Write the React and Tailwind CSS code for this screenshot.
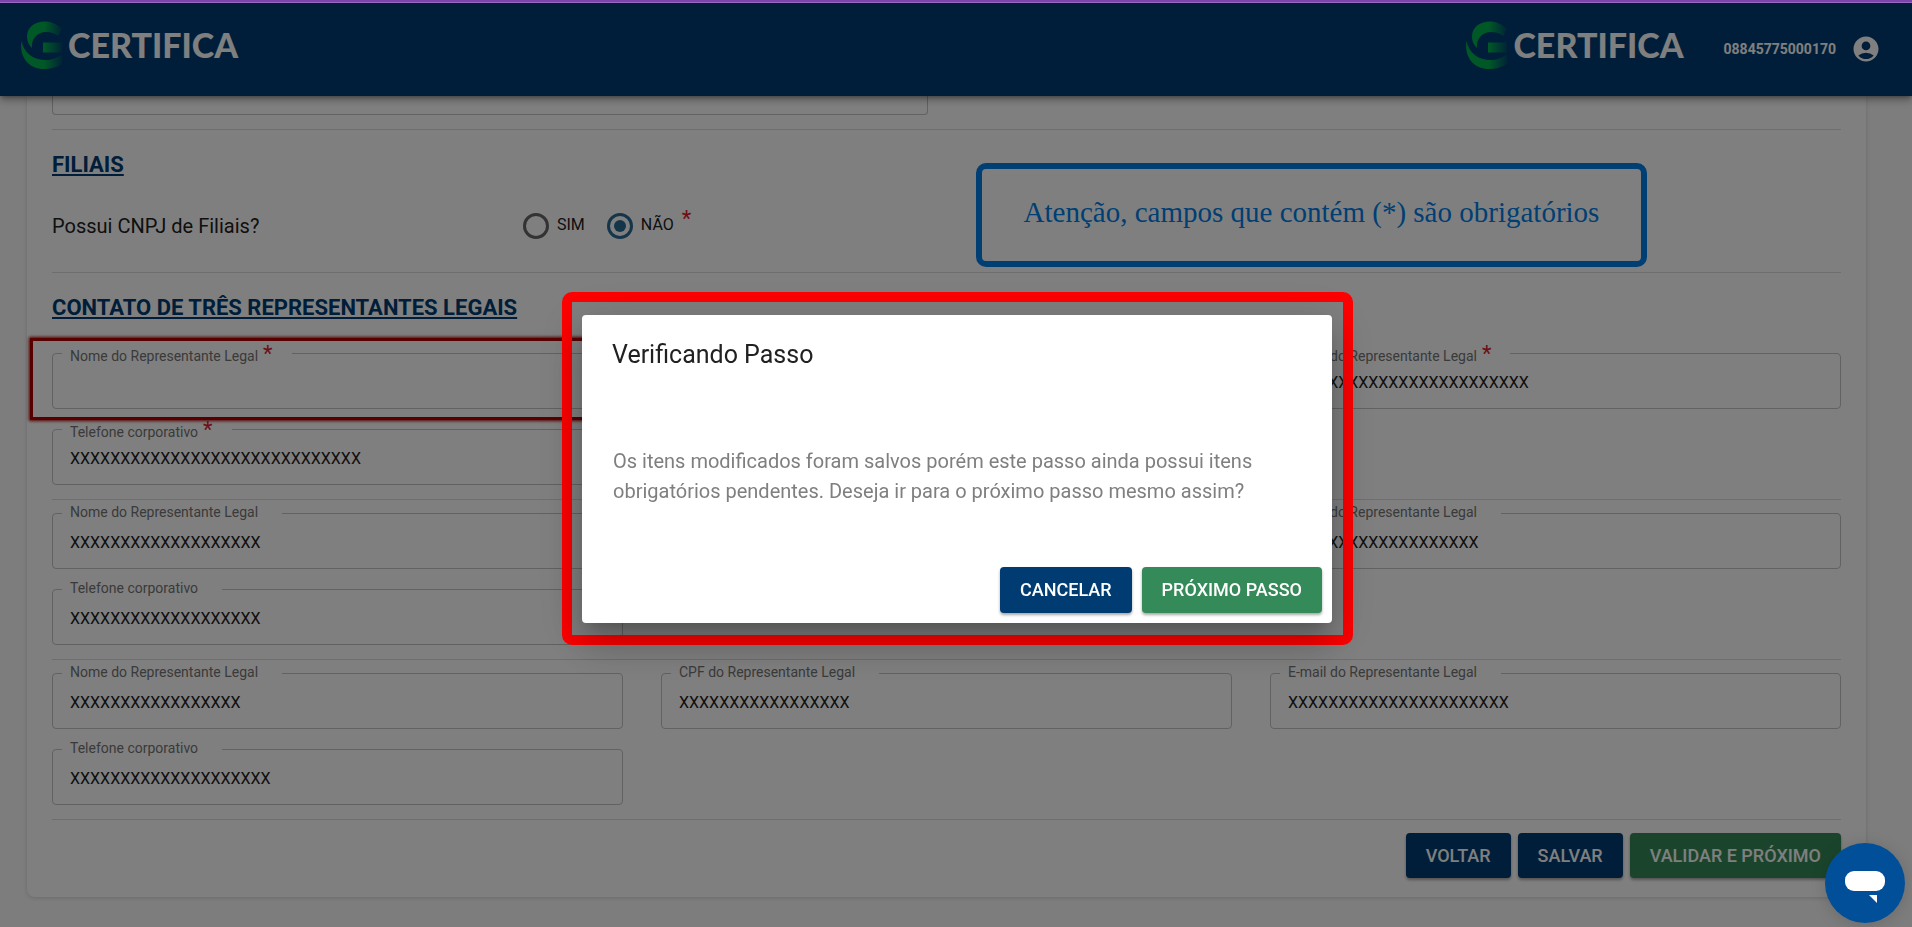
import React, { useState } from 'react';
import { MdAccountCircle } from 'react-icons/md';

const REPRESENTATIVES = [
  {
    id: 'rep1',
    required: true,
    name: '',
    cpf: 'XXXXXXXXXXXXXXXXX',
    email: 'XXXXXXXXXXXXXXXXXXXXXXXX',
    phone: 'XXXXXXXXXXXXXXXXXXXXXXXXXXXXX',
  },
  {
    id: 'rep2',
    name: 'XXXXXXXXXXXXXXXXXXX',
    cpf: 'XXXXXXXXXXXXXXXXX',
    email: 'XXXXXXXXXXXXXXXXXXX',
    phone: 'XXXXXXXXXXXXXXXXXXX',
  },
  {
    id: 'rep3',
    name: 'XXXXXXXXXXXXXXXXX',
    cpf: 'XXXXXXXXXXXXXXXXX',
    email: 'XXXXXXXXXXXXXXXXXXXXXX',
    phone: 'XXXXXXXXXXXXXXXXXXXX',
  },
];

function Logo({ id }) {
  return (
    <div className="flex items-center gap-1">
      <svg className="w-11 h-12" viewBox="0 0 44 48" aria-hidden="true">
        <defs>
          <linearGradient id={id} gradientUnits="userSpaceOnUse" x1="0" y1="0" x2="44" y2="0">
            <stop offset="0.55" stopColor="#00b04c" />
            <stop offset="1" stopColor="#003c72" />
          </linearGradient>
        </defs>
        <g fill={`url(#${id})`}>
          <path d="M42 8C37 3 31 .5 25 .5 14 .5 7 7 7 15.500 7 20 8.500 24 12 27 11 18 17 11 26 11c5 0 9 1.500 12 4z" />
          <path d="M1.500 20C-1 35 8 48 24 48c7 0 13-1.500 18-5V33c-5 4-10 6-16 6C13 39 4 32 1.500 20z" />
          <path d="M23 21.500h19v10H23z" />
        </g>
      </svg>
      <span className="font-[Lato] text-[34px] leading-[48px] font-black text-white">CERTIFICA</span>
    </div>
  );
}

function Asterisk() {
  return <span className="text-[22px] leading-3 text-[#dc202c]">*</span>;
}

function Field({ id, label, value, required }) {
  return (
    <div className="relative h-14">
      <fieldset className="absolute inset-x-0 -top-2 h-16 rounded border border-[#c4c4c4] px-[9px]" aria-hidden="true">
        <legend className="h-4 text-sm whitespace-nowrap">
          <span className="invisible pl-2 pr-6">
            {label}
            {required && ' *'}
          </span>
        </legend>
      </fieldset>
      <label
        htmlFor={id}
        className={`absolute left-[18px] flex gap-[5px] text-sm leading-4 text-[#757575] ${required ? '-top-[5px]' : '-top-[9px]'}`}
      >
        {label}
        {required && <Asterisk />}
      </label>
      <input
        id={id}
        defaultValue={value}
        required={required}
        className="relative h-full w-full bg-transparent px-[18px] pt-[2px] text-base text-[#212121] outline-none"
      />
    </div>
  );
}

function Representative({ rep }) {
  const { required } = rep;
  return (
    <div className="grid grid-cols-3 gap-x-[38px] gap-y-5 border-b border-[#dcdcdc] pt-[13px] pb-[14px]">
      <div className="relative">
        {required && (
          <div className="pointer-events-none absolute -inset-x-[22px] -top-[15px] -bottom-[11px] border-[3px] border-[#b00000] shadow-[0_0_3px_1px_#b00000]" />
        )}
        <Field id={`${rep.id}-name`} label="Nome do Representante Legal" value={rep.name} required={required} />
      </div>
      <Field id={`${rep.id}-cpf`} label="CPF do Representante Legal" value={rep.cpf} required={required} />
      <Field id={`${rep.id}-email`} label="E-mail do Representante Legal" value={rep.email} required={required} />
      <Field id={`${rep.id}-phone`} label="Telefone corporativo" value={rep.phone} required={required} />
    </div>
  );
}

function SectionTitle({ children }) {
  return (
    <h2 className="w-fit text-[22px] leading-7 font-bold text-[#003c72] underline decoration-2 underline-offset-2">
      {children}
    </h2>
  );
}

function Radio({ label, checked, onChange }) {
  return (
    <label className="flex items-center gap-2 text-base text-[#212121]">
      <input
        type="radio"
        name="filiais"
        checked={checked}
        onChange={onChange}
        className="grid size-[26px] appearance-none place-items-center rounded-full border-[3px] border-[#666666] checked:border-[#2b6a94] checked:before:size-3 checked:before:rounded-full checked:before:bg-[#2b6a94]"
      />
      <span className="pb-[2px]">{label}</span>
    </label>
  );
}

function Button({ className, children, ...props }) {
  return (
    <button
      type="button"
      className={`rounded px-5 text-lg font-medium text-white shadow-[0_2px_3px_rgba(0,0,0,0.35)] ${className}`}
      {...props}
    >
      {children}
    </button>
  );
}

function ConfirmDialog({ onClose }) {
  return (
    <div className="fixed inset-0 z-20 flex items-center justify-center bg-black/50 pt-[9px] pl-[3px]">
      <div className="rounded-[10px] border-10 border-[#ff0000]">
        <div
          role="dialog"
          aria-modal="true"
          aria-labelledby="dialog-title"
          className="mt-[13px] mr-[11px] mb-3 ml-[10px] flex w-[750px] flex-col rounded bg-white shadow-[0_11px_15px_-7px_rgba(0,0,0,0.2),0_24px_38px_3px_rgba(0,0,0,0.14),0_9px_46px_8px_rgba(0,0,0,0.12)]"
        >
          <h2 id="dialog-title" className="px-[30px] pt-6 text-[25px] leading-8 text-[#212121]">
            Verificando Passo
          </h2>
          <p className="px-[31px] pt-[75px] pb-[61px] text-xl leading-[30px] text-[#7f7f7f]">
            Os itens modificados foram salvos porém este passo ainda possui itens obrigatórios pendentes. Deseja ir
            para o próximo passo mesmo assim?
          </p>
          <div className="flex justify-end gap-[10px] p-[10px] pt-0">
            <Button className="h-[46px] bg-[#003c71]" onClick={onClose}>CANCELAR</Button>
            <Button className="h-[46px] bg-[#348a58]" onClick={onClose}>PRÓXIMO PASSO</Button>
          </div>
        </div>
      </div>
    </div>
  );
}

export default function App() {
  const [hasBranches, setHasBranches] = useState(false);
  const [dialogOpen, setDialogOpen] = useState(true);

  return (
    <div className="h-screen overflow-hidden bg-[#fafafa] font-[Roboto] text-[#212121]">
      <div className="relative z-30 h-[3px] border-b border-[#9a68c0] bg-[#7a45ac]" />

      <header className="relative z-10 flex h-[93px] items-start justify-between bg-[#003c72] pt-[18px] pr-[31px] pl-[20px] shadow-[0_2px_4px_-1px_rgba(0,0,0,0.3),0_4px_8px_rgba(0,0,0,0.3)]">
        <Logo id="logo-left" />
        <div className="flex items-center">
          <Logo id="logo-right" />
          <div className="flex items-center gap-[15px] pt-2 pl-10 text-white">
            <span className="text-sm font-bold">08845775000170</span>
            <button type="button" aria-label="Conta">
              <MdAccountCircle className="size-[30px]" />
            </button>
          </div>
        </div>
      </header>

      <main className="mr-[46px] ml-[27px] rounded-b-lg bg-white px-[25px] pb-[19px] shadow-[0_1px_4px_rgba(0,0,0,0.15)]">
        <div className="h-[19px] w-[876px] max-w-full rounded-b border border-t-0 border-[#c4c4c4]" />

        <section className="relative mt-[14px] border-y border-[#dcdcdc] pt-[21px]">
          <SectionTitle>FILIAIS</SectionTitle>
          <div className="flex h-[93px] items-center">
            <p className="w-[471px] text-xl">Possui CNPJ de Filiais?</p>
            <div className="flex items-center gap-[22px]">
              <Radio label="SIM" checked={hasBranches} onChange={() => setHasBranches(true)} />
              <div className="flex gap-2">
                <Radio label="NÃO" checked={!hasBranches} onChange={() => setHasBranches(false)} />
                <Asterisk />
              </div>
            </div>
          </div>
          <div className="absolute top-[33px] right-[194px] flex h-[104px] w-[671px] items-center justify-center rounded-[10px] border-6 border-[#007ee8] pb-1 font-[Liberation_Serif] text-[29px] text-[#007ee8]">
            Atenção, campos que contém (*) são obrigatórios
          </div>
        </section>

        <section>
          <div className="pt-[21px] pb-[18px]">
            <SectionTitle>CONTATO DE TRÊS REPRESENTANTES LEGAIS</SectionTitle>
          </div>
          {REPRESENTATIVES.map((rep) => (
            <Representative key={rep.id} rep={rep} />
          ))}
        </section>

        <div className="flex justify-end gap-[7px] pt-[13px]">
          <Button className="h-[45px] bg-[#003c72]">VOLTAR</Button>
          <Button className="h-[45px] bg-[#003c72]">SALVAR</Button>
          <Button className="h-[45px] bg-[#348a58]" onClick={() => setDialogOpen(true)}>VALIDAR E PRÓXIMO</Button>
        </div>
      </main>

      {dialogOpen && <ConfirmDialog onClose={() => setDialogOpen(false)} />}

      <button
        type="button"
        aria-label="Chat"
        className="fixed right-[7px] bottom-1 z-30 flex size-20 items-center justify-center rounded-full bg-[#004f98] shadow-[0_2px_16px_rgba(0,0,0,0.15)]"
      >
        <svg className="size-10" viewBox="0 0 40 40" fill="white">
          <rect width="40" height="20" y="8" rx="9" />
          <path d="M24 32h8v8z" />
        </svg>
      </button>
    </div>
  );
}
